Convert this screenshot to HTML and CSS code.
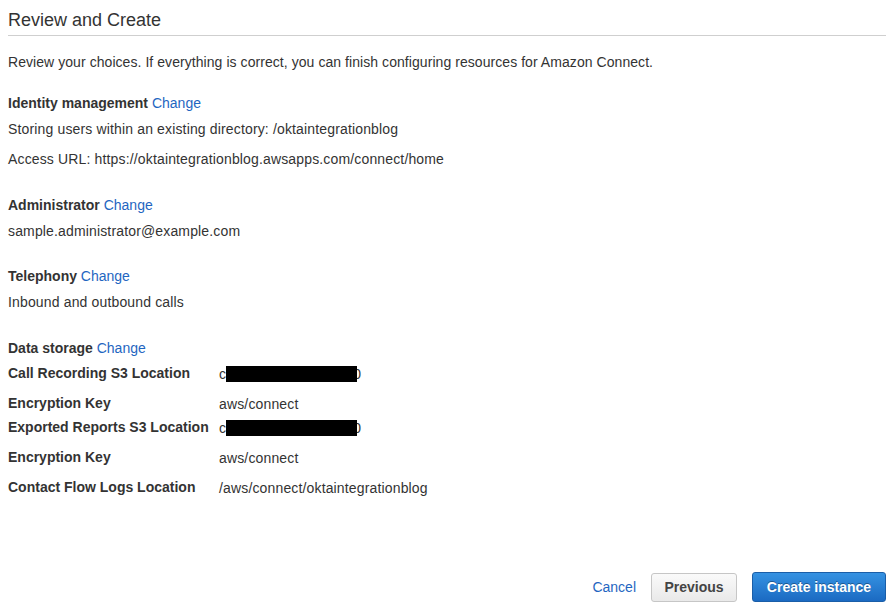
FILE: index.html
```html
<!DOCTYPE html>
<html>
<head>
<meta charset="utf-8">
<link rel="stylesheet" href="styles.css">
</head>
<body>
<div class="page">
  <h1 class="title">Review and Create</h1>
  <p class="intro">Review your choices. If everything is correct, you can finish configuring resources for Amazon Connect.</p>

  <section class="sec sec-first">
    <div class="head"><b>Identity management</b> <a class="link" href="#">Change</a></div>
    <p class="line">Storing users within an existing directory: /oktaintegrationblog</p>
    <p class="line line-wide">Access URL: https://oktaintegrationblog.awsapps.com/connect/home</p>
  </section>

  <section class="sec">
    <div class="head"><b>Administrator</b> <a class="link" href="#">Change</a></div>
    <p class="line">sample.administrator@example.com</p>
  </section>

  <section class="sec sec-tel">
    <div class="head"><b>Telephony</b> <a class="link" href="#">Change</a></div>
    <p class="line">Inbound and outbound calls</p>
  </section>

  <section class="sec">
    <div class="head"><b>Data storage</b> <a class="link" href="#">Change</a></div>
    <div class="kv kv-1">
      <div class="k">Call Recording S3 Location</div>
      <div class="v">c<span class="redact"></span>0</div>
    </div>
    <div class="kv kv-2">
      <div class="k">Encryption Key</div>
      <div class="v">aws/connect</div>
    </div>
    <div class="kv kv-3">
      <div class="k">Exported Reports S3 Location</div>
      <div class="v">c<span class="redact"></span>0</div>
    </div>
    <div class="kv kv-2">
      <div class="k">Encryption Key</div>
      <div class="v">aws/connect</div>
    </div>
    <div class="kv kv-2">
      <div class="k">Contact Flow Logs Location</div>
      <div class="v">/aws/connect/oktaintegrationblog</div>
    </div>
  </section>

  <div class="footer">
    <a class="link cancel" href="#">Cancel</a>
    <button class="btn btn-prev">Previous</button>
    <button class="btn btn-primary">Create instance</button>
  </div>
</div>
</body>
</html>
```
FILE: styles.css
```css
html, body {
  margin: 0;
  padding: 0;
  background: #fff;
}
body {
  padding: 8px;
  font-family: "Liberation Sans", Arial, Helvetica, sans-serif;
  font-size: 14px;
  color: #333;
}
.page {
  width: 878px;
}
.title {
  margin: 0;
  font-size: 18px;
  font-weight: normal;
  line-height: 24px;
  padding-bottom: 3px;
  border-bottom: 1px solid #cfcfcf;
  color: #333;
}
.intro {
  margin: 16px 0 0;
  line-height: 20px;
  letter-spacing: 0.06px;
}
.sec {
  margin-top: 26px;
}
.sec-first {
  margin-top: 21px;
}
.sec-tel {
  margin-top: 25px;
}
.head {
  line-height: 20px;
}
.head b {
  font-weight: bold;
  color: #333;
}
.link {
  color: #1f66c1;
  text-decoration: none;
}
.line {
  margin: 6px 0 0;
  line-height: 20px;
  letter-spacing: 0.15px;
}
.line-wide {
  margin-top: 10px;
}
.kv {
  display: flex;
  height: 20px;
  line-height: 20px;
}
.kv-1 {
  margin-top: 5px;
}
.kv-2 {
  margin-top: 10px;
}
.kv-3 {
  margin-top: 4px;
}
.k {
  width: 211px;
  flex: none;
  font-weight: bold;
}
.v {
  padding-top: 2px;
  box-sizing: border-box;
  height: 20px;
  display: flex;
  align-items: center;
  letter-spacing: 0.15px;
}
.redact {
  display: inline-block;
  width: 131px;
  height: 16px;
  background: #000;
  margin: 0 -4px 0 0;
  position: relative;
  z-index: 1;
}
.footer {
  margin-top: 75px;
  display: flex;
  justify-content: flex-end;
  align-items: center;
}
.cancel {
  font-size: 14px;
  margin-right: 15px;
}
.btn {
  font-family: "Liberation Sans", Arial, Helvetica, sans-serif;
  font-size: 14px;
  font-weight: bold;
  border-radius: 3px;
  cursor: pointer;
  box-sizing: border-box;
  padding: 0;
}
.btn-prev {
  width: 86px;
  height: 29px;
  color: #444;
  background: linear-gradient(#fafafa, #e9e9e9);
  border: 1px solid #c6c6c6;
  margin-right: 15px;
}
.btn-primary {
  width: 134px;
  height: 30px;
  color: #fff;
  background: linear-gradient(#3592e2, #1b6ac2);
  border: 1px solid #1a5ea8;
  text-shadow: 0 -1px 0 rgba(0,0,0,0.35);
}
```
